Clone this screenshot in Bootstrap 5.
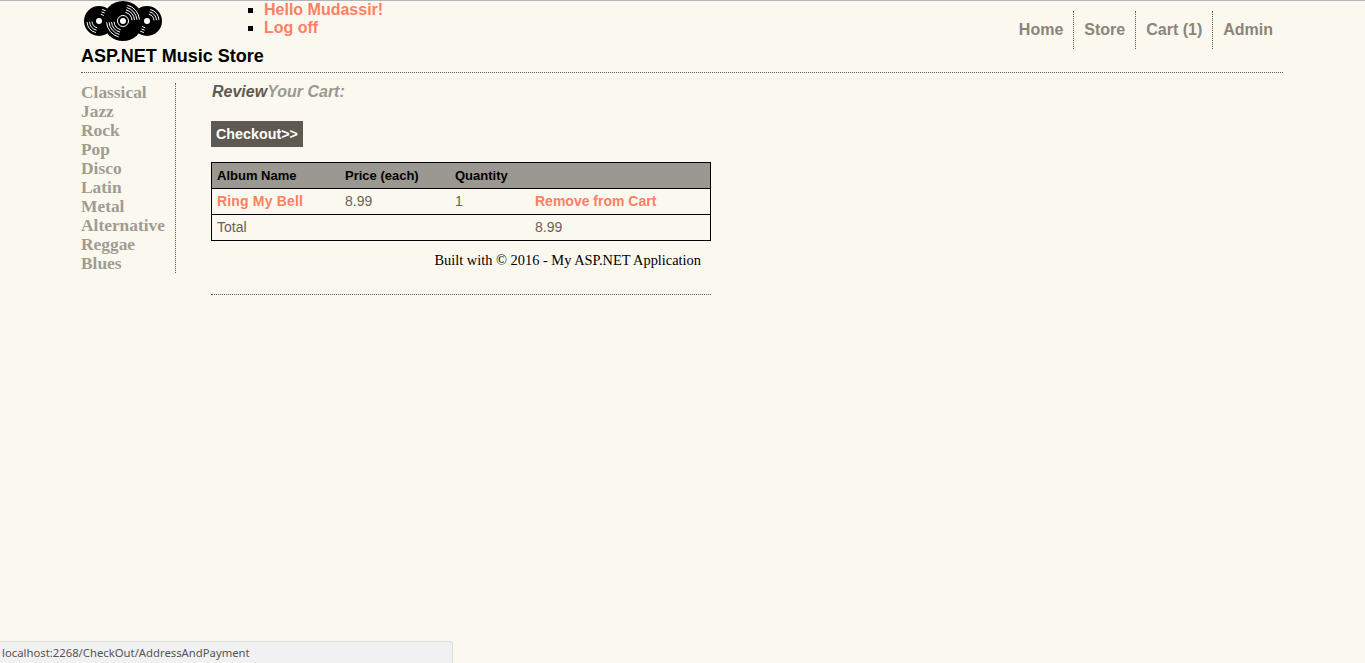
<!DOCTYPE html>
<html lang="en">
<head>
<meta charset="utf-8">
<title>ASP.NET Music Store</title>
<link href="https://cdn.jsdelivr.net/npm/bootstrap@5.3.0/dist/css/bootstrap.min.css" rel="stylesheet">
<style>
html,body{height:100%}
body{background:#fbf8f0;font-family:"Liberation Sans",Arial,sans-serif;font-size:14px;color:#67625a;border-top:1px solid #b7b4b6;overflow:hidden}
.shell{margin:0 82px 0 81px}
.masthead{height:72px;border-bottom:1px dotted #5f5a51}
.brand-col{width:183px;flex:none}
.logo-svg{display:block;margin-left:2px;width:80px;height:40px}
.brand-name{font-size:18px;font-weight:700;color:#000;line-height:21px;margin:5px 0 0}
.hello-list{list-style:square;margin:0;padding:0;color:#000;font-size:16px;line-height:18px}
.hello-list a,.salmon{color:#ff7f62;font-weight:700;text-decoration:none}
.ring-link{letter-spacing:.17px}
.top-links{margin-top:10px;height:38px}
.top-links a{display:block;height:38px;line-height:38px;padding:0 10px 0 11px;font-size:16px;font-weight:700;color:#8b8578;text-decoration:none}
.top-links li+li{border-left:1px dotted #5f5a51}
.top-links li+li a{padding-left:10px}
.side-col{width:95px;flex:none;margin-top:10px;height:190px;border-right:1px dotted #5f5a51}
.side-col a{display:block;font-family:"Liberation Serif",serif;font-size:17.4px;font-weight:700;line-height:19px;color:#a09c90;text-decoration:none}
.main-col{width:500px;margin-left:35px;flex:none}
.review-title{font-size:16px;font-style:italic;font-weight:700;line-height:18px;color:#9a9890;margin:10px 0 0 1px}
.review-title b{color:#5f5a51}
.checkout-btn{display:inline-block;margin-top:20px;background:#5f5a51;color:#fff;font-weight:700;font-size:14.3px;line-height:16px;padding:5px;height:26px;border:0;border-radius:0;width:92px;text-decoration:none;white-space:nowrap;text-align:left}
.checkout-btn:hover{background:#5f5a51;color:#fff}
.cart-table{width:500px;table-layout:fixed;margin:15px 0 0;border-collapse:collapse;border:1px solid #000;font-size:14px;background:transparent;--bs-table-bg:transparent}
.cart-table th,.cart-table td{height:26px;padding:0 5px;line-height:25px;vertical-align:middle;border:0;border-top:1px solid #000;color:#67625a;background:transparent;box-shadow:none}
.cart-table thead th{background:#9a9890;color:#000;font-size:13px;font-weight:700;border-top:0}
.cart-table .col-a{width:128.5px}
.cart-table .col-b{width:110px}
.cart-table .col-c{width:80px}
.foot-note{font-family:"Liberation Serif",serif;font-size:14.4px;line-height:16px;color:#000;text-align:right;padding:11px 10px 0 0;height:54px;border-bottom:1px dotted #5f5a51}
.status-pill{position:fixed;left:0;bottom:0;width:453px;height:22px;background:#f1f1f1;border:1px solid #dfdfdc;border-left:0;border-bottom:0;border-top-right-radius:3px;font-family:"Noto Sans",sans-serif;font-size:11.3px;line-height:22px;padding-left:2px;color:#555}
.groove{fill:none;stroke:#fff;stroke-width:.9;stroke-dasharray:70 110}
</style>
</head>
<body>
<div class="shell">
  <header class="masthead d-flex">
    <div class="brand-col">
      <svg class="logo-svg" viewBox="0 0 80 40" aria-label="logo">
        <circle cx="16" cy="20" r="15" fill="#000"/>
        <circle cx="64" cy="20" r="15" fill="#000"/>
        <g transform="rotate(-75 16 20)">
          <circle class="groove" cx="16" cy="20" r="7" pathLength="360"/>
          <circle class="groove" cx="16" cy="20" r="9.5" pathLength="360"/>
          <circle class="groove" cx="16" cy="20" r="12" pathLength="360"/>
        </g>
        <g transform="rotate(-75 64 20)">
          <circle class="groove" cx="64" cy="20" r="7" pathLength="360"/>
          <circle class="groove" cx="64" cy="20" r="9.5" pathLength="360"/>
          <circle class="groove" cx="64" cy="20" r="12" pathLength="360"/>
        </g>
        <circle cx="16" cy="20" r="3" fill="#fff"/>
        <circle cx="64" cy="20" r="3" fill="#fff"/>
        <circle cx="40" cy="20" r="20" fill="#000"/>
        <g transform="rotate(-75 40 20)">
          <circle class="groove" cx="40" cy="20" r="9" pathLength="360"/>
          <circle class="groove" cx="40" cy="20" r="11.5" pathLength="360"/>
          <circle class="groove" cx="40" cy="20" r="14" pathLength="360"/>
          <circle class="groove" cx="40" cy="20" r="16.5" pathLength="360"/>
        </g>
        <circle cx="40" cy="20" r="5.5" fill="none" stroke="#fff"/>
        <circle cx="40" cy="20" r="3" fill="#fff"/>
      </svg>
      <p class="brand-name">ASP.NET Music Store</p>
    </div>
    <ul class="hello-list">
      <li><a href="#">Hello Mudassir!</a></li>
      <li><a href="#">Log off</a></li>
    </ul>
    <ul class="top-links nav ms-auto">
      <li><a href="#">Home</a></li>
      <li><a href="#">Store</a></li>
      <li><a href="#">Cart (1)</a></li>
      <li><a href="#">Admin</a></li>
    </ul>
  </header>
  <div class="d-flex">
    <nav class="side-col">
      <a href="#">Classical</a><a href="#">Jazz</a><a href="#">Rock</a><a href="#">Pop</a><a href="#">Disco</a><a href="#">Latin</a><a href="#">Metal</a><a href="#">Alternative</a><a href="#">Reggae</a><a href="#">Blues</a>
    </nav>
    <main class="main-col">
      <h3 class="review-title"><b>Review</b>Your Cart:</h3>
      <a class="btn checkout-btn" href="#">Checkout&gt;&gt;</a>
      <table class="table cart-table">
        <colgroup><col class="col-a"><col class="col-b"><col class="col-c"><col></colgroup>
        <thead><tr><th>Album Name</th><th>Price (each)</th><th>Quantity</th><th></th></tr></thead>
        <tbody>
          <tr><td><a class="salmon ring-link" href="#">Ring My Bell</a></td><td>8.99</td><td>1</td><td><a class="salmon" href="#">Remove from Cart</a></td></tr>
          <tr><td>Total</td><td></td><td></td><td>8.99</td></tr>
        </tbody>
      </table>
      <footer class="foot-note">Built with © 2016 - My ASP.NET Application</footer>
    </main>
  </div>
</div>
<div class="status-pill">localhost:2268/CheckOut/AddressAndPayment</div>
<script src="https://cdn.jsdelivr.net/npm/bootstrap@5.3.0/dist/js/bootstrap.bundle.min.js"></script>
</body>
</html>
